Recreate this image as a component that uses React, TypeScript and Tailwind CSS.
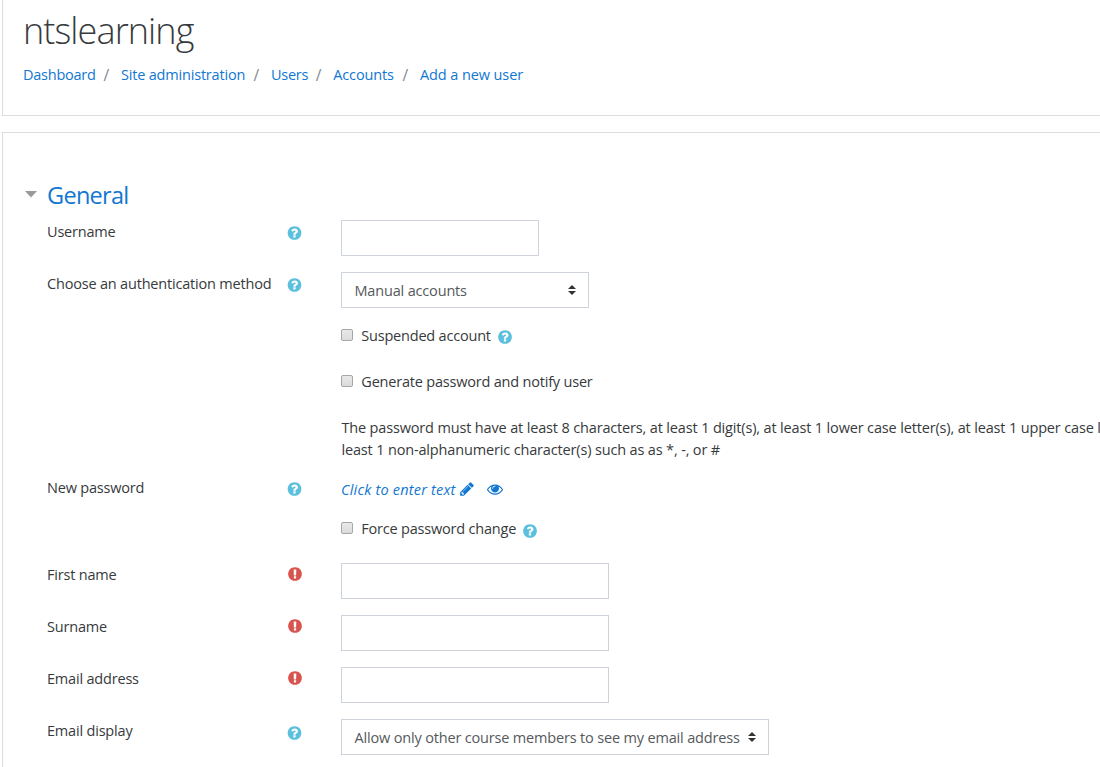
import type { ReactNode } from "react";

const ICONS = {
  help: "M1024 1376v-192q0-14-9-23t-23-9h-192q-14 0-23 9t-9 23v192q0 14 9 23t23 9h192q14 0 23-9t9-23zm256-672q0-88-55.5-163t-138.5-116-170-41q-243 0-371 213-15 24 8 42l132 100q7 6 19 6 16 0 25-12 53-68 86-92 34-24 86-24 48 0 85.5 26t37.5 59q0 38-20 61t-68 45q-63 28-115.5 86.5t-52.5 125.5v36q0 14 9 23t23 9h192q14 0 23-9t9-23q0-19 21.5-49.5t54.5-49.5q32-18 49-28.5t46-35 44.5-48 28-60.5 12.5-81zm384 192q0 209-103 385.5t-279.5 279.5-385.5 103-385.5-103-279.5-279.5-103-385.5 103-385.5 279.5-279.5 385.5-103 385.5 103 279.5 279.5 103 385.5z",
  required:
    "M896 128q209 0 385.5 103t279.5 279.5 103 385.5-103 385.5-279.5 279.5-385.5 103-385.5-103-279.5-279.5-103-385.5 103-385.5 279.5-279.5 385.5-103zm128 1247v-190q0-14-9-23.5t-22-9.5h-192q-13 0-23 10t-10 23v190q0 13 10 23t23 10h192q13 0 22-9.5t9-23.5zm-2-344l18-621q0-12-10-18-10-8-24-8h-220q-14 0-24 8-10 6-10 18l17 621q0 10 10 17.5t24 7.5h185q14 0 23.5-7.5t10.5-17.5z",
  pencil:
    "M491 1536l91-91-235-235-91 91v107h128v128h107zm523-928q0-22-22-22-10 0-17 7l-542 542q-7 7-7 17 0 22 22 22 10 0 17-7l542-542q7-7 7-17zm-54-192l416 416-832 832h-416v-416zm683 96q0 53-37 90l-166 166-416-416 166-165q36-38 90-38 53 0 91 38l235 234q37 39 37 91z",
  eye: "M1664 960q-152-236-381-353 61 104 61 225 0 185-131.5 316.5t-316.5 131.5-316.5-131.5-131.5-316.5q0-121 61-225-229 117-381 353 133 205 333.5 326.5t434.5 121.5 434.5-121.5 333.5-326.5zm-720-384q0-20-14-34t-34-14q-125 0-214.5 89.5t-89.5 214.5q0 20 14 34t34 14 34-14 14-34q0-86 61-147t147-61q20 0 34-14t14-34zm848 384q0 34-20 69-140 230-376.5 368.5t-499.5 138.5-499.5-139-376.5-368q-20-35-20-69t20-69q140-229 376.5-368t499.5-139 499.5 139 376.5 368q20 35 20 69z",
};

function Icon({ name, className, viewBox = "0 0 1792 1792" }: { name: keyof typeof ICONS; className: string; viewBox?: string }) {
  return (
    <svg viewBox={viewBox} className={`size-4 shrink-0 ${className}`} fill="currentColor" aria-hidden="true">
      <path d={ICONS[name]} />
    </svg>
  );
}

function Row({
  label,
  icon,
  className = "",
  iconClass = "mt-[5px]",
  children,
}: {
  label?: string;
  icon?: "help" | "required";
  className?: string;
  iconClass?: string;
  children: ReactNode;
}) {
  return (
    <div className={`flex items-start ${className}`}>
      <div className="flex w-[294px] shrink-0">
        <span className="w-[240px] pt-px tracking-[-0.19px] whitespace-nowrap">{label}</span>
        {icon === "help" && <Icon name="help" viewBox="56 0 1792 1792" className={`text-[#5bc0de] ${iconClass}`} />}
        {icon === "required" && <Icon name="required" className="mt-[3px] text-[#d9534f]" />}
      </div>
      {children}
    </div>
  );
}

function TextInput({ className, label }: { className: string; label: string }) {
  return <input type="text" aria-label={label} className={`h-9 border border-[#ced2da] bg-white px-3 outline-none ${className}`} />;
}

function Select({ className, children }: { className: string; children: ReactNode }) {
  return (
    <button
      type="button"
      className={`flex h-9 items-center justify-between border border-[#ced2da] bg-white pr-3 pl-[12.5px] text-left text-[#55595c] ${className}`}
    >
      <span className="pt-[2px] tracking-[-0.17px] whitespace-nowrap">{children}</span>
      <svg viewBox="0 0 4 5" className="h-[10px] w-2 shrink-0" fill="#333">
        <path d="M2 0L0 2h4zm0 5L0 3h4z" />
      </svg>
    </button>
  );
}

function Check({ children, helpClass }: { children: ReactNode; helpClass?: string }) {
  return (
    <div className="flex h-[22px] items-start">
      <span
        role="checkbox"
        aria-checked="false"
        className="mt-1 mr-[8.3px] size-3 shrink-0 rounded-[2px] border border-[#a6a6a6] bg-linear-to-b from-[#e8e8e8] to-[#dcdcdc]"
      />
      <span className="tracking-[-0.2px] whitespace-nowrap">{children}</span>
      {helpClass && <Icon name="help" className={`ml-[5.8px] text-[#5bc0de] ${helpClass}`} />}
    </div>
  );
}

const CRUMBS = [
  { text: "Dashboard", width: "w-[98px]" },
  { text: "Site administration", width: "w-[150px] tracking-[-0.19px]" },
  { text: "Users", width: "w-[62.3px]" },
  { text: "Accounts", width: "w-[86.7px] tracking-[-0.15px]" },
  { text: "Add a new user", width: "w-auto tracking-[-0.1px]" },
];

export default function App() {
  return (
    <div className="h-[767px] w-[1100px] overflow-hidden bg-white pl-[2px] font-['Open_Sans','Noto_Sans',sans-serif] text-[14.5px] leading-[22px] tracking-[-0.14px] text-[#373a3c]">
      <header className="h-[116px] border-b border-l border-[#dddddd] pl-5">
        <h1 className="pt-[8px] text-[36px] leading-[45px] font-light tracking-[-0.9px]">ntslearning</h1>
        <nav className="mt-[11px] flex tracking-[-0.25px] text-[#1177d1]">
          {CRUMBS.map(({ text, width }, i) => (
            <span key={text} className={`flex justify-between whitespace-nowrap ${width}`}>
              <a>{text}</a>
              {i < CRUMBS.length - 1 && <span className="pr-3 text-[15.5px] text-[#818a91]">/</span>}
            </span>
          ))}
        </nav>
      </header>

      <main className="mt-4 h-[660px] border-t border-l border-[#dddddd] pl-[44px]">
        <div className="-ml-[22px] flex pt-[47px]">
          <svg viewBox="0 0 12 7" className="mt-[11px] mr-[10px] h-[7px] w-3 shrink-0" fill="#999">
            <path d="M0 0h12L6 6.5z" />
          </svg>
          <h2 className="text-[23.5px] leading-[30px] tracking-[-0.7px] text-[#1177d1]">General</h2>
        </div>

        <Row label="Username" icon="help" className="mt-[10px] h-[52px]">
          <TextInput label="Username" className="w-[198px]" />
        </Row>
        <Row label="Choose an authentication method" icon="help" className="h-[53px]">
          <Select className="w-[248px]">Manual accounts</Select>
        </Row>
        <Row className="h-[46px]">
          <Check helpClass="mt-1">Suspended account</Check>
        </Row>
        <Row className="h-[46px]">
          <Check>Generate password and notify user</Check>
        </Row>
        <Row className="h-[59px]">
          <p className="pl-[0.4px] tracking-[-0.155px] whitespace-nowrap">
            The password must have at least 8 characters, at least 1 digit(s), at least 1 lower case letter(s), at least 1 upper case letter(s), at
            <br />
            least 1 non-alphanumeric character(s) such as as *, -, or #
          </p>
        </Row>
        <Row label="New password" icon="help" className="h-[42px]">
          <div className="mt-[3px] flex text-[#1177d1]">
            <em className="w-[114px] tracking-[0.2px] whitespace-nowrap">Click to enter text</em>
            <Icon name="pencil" className="mt-[2px] ml-1" />
            <Icon name="eye" className="mt-[2px] ml-3" />
          </div>
        </Row>
        <Row className="h-[45px]">
          <Check helpClass="mt-[5px]">Force password change</Check>
        </Row>
        <Row label="First name" icon="required" className="h-[52px]">
          <TextInput label="First name" className="w-[268px]" />
        </Row>
        <Row label="Surname" icon="required" className="h-[52px]">
          <TextInput label="Surname" className="w-[268px]" />
        </Row>
        <Row label="Email address" icon="required" className="h-[52px]">
          <TextInput label="Email address" className="w-[268px]" />
        </Row>
        <Row label="Email display" icon="help" iconClass="mt-[6px]">
          <Select className="w-[428px]">Allow only other course members to see my email address</Select>
        </Row>
      </main>
    </div>
  );
}
